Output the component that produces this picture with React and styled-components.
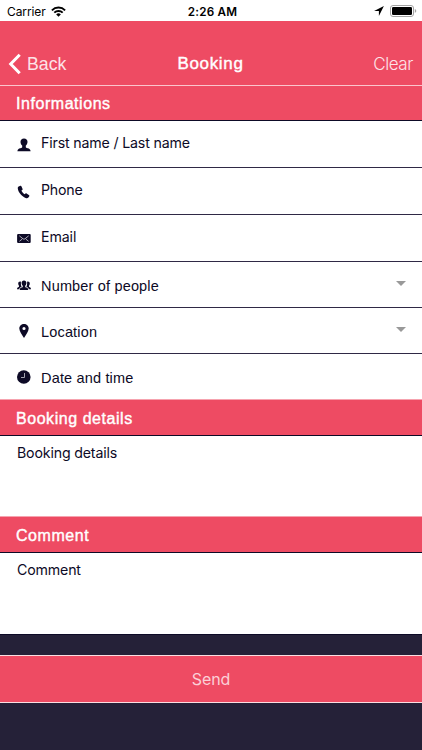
import styled, { createGlobalStyle } from 'styled-components';

const PINK = '#ee4b63';
const NAVY = '#252138';
const INK = '#0d0a26';
const HELVETICA = "'Liberation Sans', Arial, sans-serif";
const SYSTEM = "Inter, 'Liberation Sans', sans-serif";

const icons = {
  person: (
    <path d='M7 .5C4.800.5 3.500 1.800 3.500 3.800c0 1.800.8 3.100 1.700 3.800v1.400c0 .7-.6 1-1.900 1.300C1.600 10.700.6 11.400.4 13.200h13.200c-.2-1.800-1.200-2.500-2.900-2.900-1.300-.3-1.900-.6-1.900-1.300V7.600c.9-.7 1.700-2 1.700-3.800C10.500 1.800 9.200.5 7 .5z' />
  ),
  phone: (
    <path d='M1.700 1.500 3.300.8c.4-.2.900 0 1.100.4l1.200 2.700c.1.400 0 .8-.3 1l-.9.700c.5 1.400 1.800 2.900 3.200 3.700l.9-.8c.3-.2.800-.3 1.100 0l2.500 1.700c.4.300.4.700.2 1.100l-.9 1.200c-.6.700-1.700.8-2.800.4C4.700 11.200 1.300 7.500.8 3.500c-.1-.9.200-1.700.9-2z' />
  ),
  mail: (
    <>
      <rect x='.1' y='2.500' width='13.600' height='9' rx='1' />
      <path
        d='m2.300 4.300 3.800 3.100q.9.600 1.800 0l3.800-3.100M2.400 9.800l2.800-2.200m6.400 2.200L8.800 7.600'
        fill='none'
        stroke='#d5d3da'
        strokeWidth='.8'
      />
    </>
  ),
  people: (
    <>
      <path d='M7 1.500c-1.600 0-2.400 1-2.400 2.400 0 1.200.5 2.200 1.200 2.800v1c0 .5-.5.700-1.200.9-1.200.3-1.700.9-1.800 2.400h8.400c-.1-1.500-.6-2.100-1.800-2.400-.7-.2-1.200-.4-1.200-.9v-1c.7-.6 1.200-1.600 1.200-2.800C9.400 2.500 8.600 1.500 7 1.500z' />
      <path d='M3.900 2.700C2.400 2.200 1.200 3 1.200 4.600c0 .9.300 1.600.8 2.100v.7c0 .4-.3.600-.9.800C.4 8.500.1 9 0 10.200h2.300c.2-1.200.8-1.800 2-2.100l.3-.3C4.200 7 3.900 6 3.900 5zM10.100 2.700c1.500-.5 2.700.3 2.700 1.900 0 .9-.3 1.600-.8 2.100v.7c0 .4.3.6.9.8.7.3 1 .8 1.100 2h-2.300c-.2-1.200-.8-1.800-2-2.100l-.3-.3c.4-.8.7-1.800.7-2.800z' />
    </>
  ),
  pin: (
    <path
      fillRule='evenodd'
      d='M7 0C4.400 0 2.300 2 2.300 4.500 2.300 7.500 5.300 11 7 14c1.700-3 4.700-6.500 4.700-9.500C11.700 2 9.600 0 7 0zm0 2.900a1.600 1.600 0 1 1 0 3.200 1.600 1.600 0 0 1 0-3.200z'
    />
  ),
  clock: (
    <>
      <circle cx='6.800' cy='7' r='6.800' />
      <path d='M7.500 3v4.500H4' fill='none' stroke='#b5b4bf' strokeWidth='.9' />
    </>
  ),
};

const fields = [
  { icon: 'person', label: 'First name / Last name', height: 47, iconTop: 1, textTop: -2, spacing: -0.17 },
  { icon: 'phone', label: 'Phone', height: 47, iconTop: 1, textTop: -2, spacing: -0.2 },
  { icon: 'mail', label: 'Email', height: 47, iconTop: 0.5, textTop: -2, spacing: -0.1 },
  { icon: 'people', label: 'Number of people', height: 46, iconTop: 1, textTop: 1, native: true, select: true },
  { icon: 'pin', label: 'Location', height: 46, iconTop: 0, textTop: 1, native: true, select: true },
  { icon: 'clock', label: 'Date and time', height: 46, iconTop: 0, textTop: 1, native: true, last: true },
];

const BackIcon = () => (
  <svg width='13' height='22' viewBox='0 0 13 22'>
    <path d='M11.700 1.800 2.700 11l9 9.200' fill='none' stroke='#fff' strokeWidth='3' />
  </svg>
);

const WifiIcon = () => (
  <svg width='15' height='11' viewBox='0 0 15 11'>
    <g fill='none' stroke='#000' strokeWidth='1.900'>
      <path d='M.9 4.300a9.300 9.300 0 0 1 13.200 0' />
      <path d='M3.300 6.700a5.900 5.900 0 0 1 8.400 0' />
    </g>
    <path d='m7.500 10.700-2.300-2.300a3.300 3.300 0 0 1 4.600 0z' />
  </svg>
);

const LocationArrow = () => (
  <svg width='10' height='10' viewBox='0 0 10 10'>
    <path d='M9.900.1.100 5h4.800v4.900z' />
  </svg>
);

const BatteryIcon = () => (
  <svg width='27' height='12' viewBox='0 0 27 12'>
    <rect x='.5' y='.5' width='23' height='11' rx='2.500' fill='#fff' stroke='#a3a3a3' />
    <rect x='2' y='2' width='20' height='8' rx='1.300' />
    <path d='M24.800 4.100v3.800q1.500-.6 1.500-1.900t-1.500-1.900z' fill='#a3a3a3' />
  </svg>
);

const Field = ({ icon, label, height, iconTop, textTop, spacing, native, select, last }) => (
  <FieldRow $height={height} $last={last}>
    <FieldIcon viewBox='0 0 14 14' $top={iconTop}>
      {icons[icon]}
    </FieldIcon>
    <FieldLabel $native={native} $top={textTop} $spacing={spacing}>
      {label}
    </FieldLabel>
    {select && <Caret />}
  </FieldRow>
);

const App = () => (
  <>
    <GlobalStyle />
    <Screen>
      <StatusBar>
        <StatusSide>
          <Carrier>Carrier</Carrier>
          <WifiIcon />
        </StatusSide>
        <Time>2:26 AM</Time>
        <StatusSide $end>
          <LocationArrow />
          <BatteryIcon />
        </StatusSide>
      </StatusBar>
      <Header>
        <BackButton>
          <BackIcon />
          Back
        </BackButton>
        <Title>Booking</Title>
        <ClearButton>Clear</ClearButton>
      </Header>
      <SectionTitle $height={35}>Informations</SectionTitle>
      {fields.map((field) => (
        <Field key={field.label} {...field} />
      ))}
      <SectionTitle $height={36} $top={3}>
        Booking details
      </SectionTitle>
      <Notes $height={81}>Booking details</Notes>
      <SectionTitle $height={36} $top={3}>
        Comment
      </SectionTitle>
      <Notes $height={82} $line>
        Comment
      </Notes>
      <SendButton>Send</SendButton>
    </Screen>
  </>
);

const GlobalStyle = createGlobalStyle`
  * {
    box-sizing: border-box;
  }

  body {
    margin: 0;
  }

  button {
    border: 0;
    padding: 0;
    margin: 0;
    background: none;
  }

  svg {
    display: block;
    flex: none;
  }
`;

const Screen = styled.div`
  width: 422px;
  height: 750px;
  overflow: hidden;
  display: flex;
  flex-direction: column;
  background: ${NAVY};
  font-family: ${SYSTEM};
  white-space: nowrap;

  > * {
    flex: none;
  }
`;

const StatusBar = styled.div`
  height: 21px;
  display: grid;
  grid-template-columns: 1fr auto 1fr;
  align-items: center;
  padding: 1px 5px 0 7px;
  background: #fff;
  color: #000;
`;

const StatusSide = styled.div`
  display: flex;
  align-items: center;
  gap: 6px;
  justify-content: ${({ $end }) => ($end ? 'flex-end' : 'flex-start')};
`;

const Carrier = styled.span`
  width: 38px;
  font-size: 12px;
  letter-spacing: -0.1px;
`;

const Time = styled.span`
  padding: 1px 0 0 1px;
  font-size: 11.7px;
  font-weight: 600;
  letter-spacing: 0.2px;
`;

const Header = styled.header`
  height: 65px;
  display: grid;
  grid-template-columns: 1fr auto 1fr;
  align-items: center;
  padding: 22px 9px 0 8px;
  background: ${PINK};
  border-bottom: 1px solid #fbc5cd;
  color: #fff;
`;

const BackButton = styled.button`
  display: flex;
  align-items: center;
  gap: 6px;
  color: #fde3e7;
  font-family: ${HELVETICA};
  font-size: 17.7px;
`;

const Title = styled.h1`
  margin: 0;
  font-family: ${HELVETICA};
  font-size: 17px;
  font-weight: 400;
  letter-spacing: 0.65px;
  -webkit-text-stroke: 0.4px #fff;
`;

const ClearButton = styled.button`
  justify-self: end;
  color: #fde3e7;
  font-family: ${SYSTEM};
  font-size: 17px;
  font-weight: 300;
  letter-spacing: -0.4px;
`;

const SectionTitle = styled.h2`
  height: ${({ $height }) => $height}px;
  margin: 0;
  padding: ${({ $top = 1 }) => $top}px 16px 0;
  display: flex;
  align-items: center;
  background: ${PINK};
  border-bottom: 1px solid ${INK};
  color: #fff;
  font-family: ${HELVETICA};
  font-size: 16px;
  font-weight: 400;
  letter-spacing: 0.55px;
  -webkit-text-stroke: 0.4px #fff;
`;

const FieldRow = styled.div`
  height: ${({ $height }) => $height}px;
  display: flex;
  align-items: center;
  padding: 0 16px 0 17px;
  background: #fff;
  border-bottom: 1px solid ${({ $last }) => ($last ? '#f6a3af' : '#2f2945')};
`;

const FieldIcon = styled.svg`
  width: 14px;
  height: 14px;
  margin-right: 10px;
  fill: ${INK};
  transform: translateY(${({ $top }) => $top}px);
`;

const FieldLabel = styled.span`
  color: ${INK};
  font-family: ${({ $native }) => ($native ? HELVETICA : SYSTEM)};
  font-size: ${({ $native }) => ($native ? 14.5 : 14.2)}px;
  letter-spacing: ${({ $native, $spacing }) => ($native ? 0.17 : $spacing)}px;
  transform: translateY(${({ $top }) => $top}px);
`;

const Caret = styled.span`
  margin-left: auto;
  margin-bottom: 3px;
  border: 5px solid transparent;
  border-top: 5px solid #999;
  border-bottom: 0;
`;

const Notes = styled.div`
  height: ${({ $height }) => $height}px;
  padding: 8px 17px;
  background: #fff;
  border-bottom: 1px solid ${({ $line }) => ($line ? INK : '#f6a3af')};
  color: ${INK};
  font-size: 14.2px;
  line-height: 18px;
  letter-spacing: -0.17px;
`;

const SendButton = styled.button`
  height: 48px;
  margin-top: 20px;
  background: ${PINK};
  border-top: 1px solid #fbdde1;
  border-bottom: 1px solid #fbdde1;
  color: #fbd0d7;
  font-family: ${SYSTEM};
  font-size: 16px;
  letter-spacing: -0.1px;
`;

export default App;
